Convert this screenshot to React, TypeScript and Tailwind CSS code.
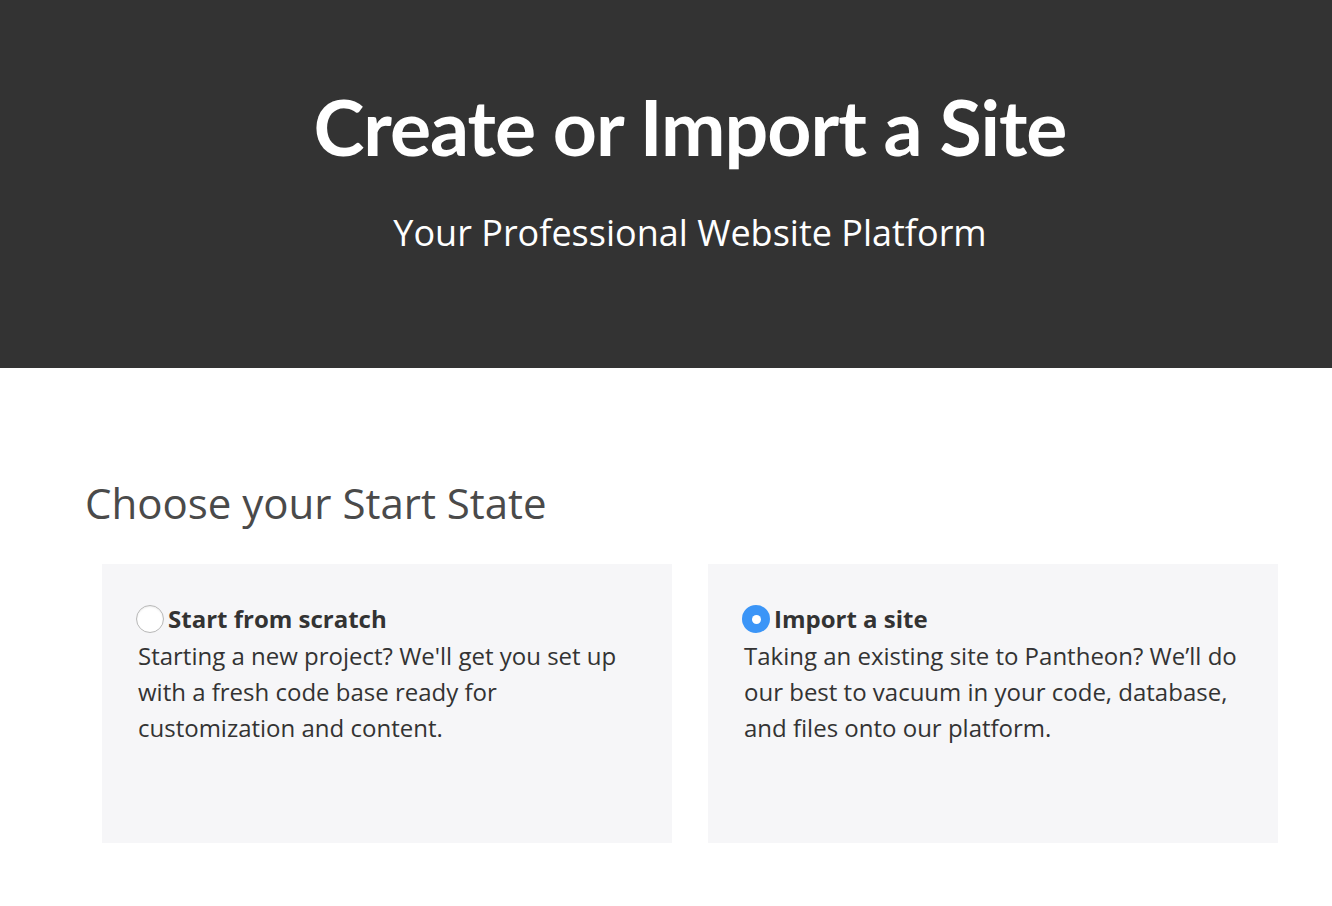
import React from "react";

const options = [
  {
    id: "scratch",
    title: "Start from scratch",
    body: "Starting a new project? We'll get you set up with a fresh code base ready for customization and content.",
    checked: false,
  },
  {
    id: "import",
    title: "Import a site",
    body: "Taking an existing site to Pantheon? We\u2019ll do our best to vacuum in your code, database, and files onto our platform.",
    checked: true,
  },
];

const Radio = ({ checked }: { checked: boolean }) =>
  checked ? (
    <span className="-ml-[2px] mr-[4px] flex h-[28px] w-[28px] shrink-0 items-center justify-center rounded-full bg-[#3b95f7]">
      <span className="h-[9px] w-[9px] rounded-full bg-white" />
    </span>
  ) : (
    <span className="-ml-[2px] mr-[4px] h-[28px] w-[28px] shrink-0 rounded-full border border-[#b8b8b8] bg-white shadow-[inset_0_1px_2px_rgba(0,0,0,0.08)]" />
  );

export default function App() {
  return (
    <div className="min-h-[906px] bg-white font-['Open_Sans',sans-serif] text-[#333]">
      <header className="flex h-[368px] flex-col items-center bg-[#333333] pl-[48px] pt-[76px] text-white">
        <h1 className="font-['Lato',sans-serif] text-[77px] font-bold leading-[100px] tracking-[-1px]">
          Create or Import a Site
        </h1>
        <p className="mt-[32px] text-[36px] leading-[50px]">Your Professional Website Platform</p>
      </header>

      <main className="pl-[85px] pt-[107px]">
        <h2 className="text-[42px] leading-[56px] text-[#4a4a4a]">Choose your Start State</h2>
        <div className="mt-[33px] flex gap-[36px] pl-[17px]">
          {options.map((o) => (
            <label
              key={o.id}
              className="flex h-[279px] w-[570px] flex-col bg-[#f6f6f8] pl-[36px] pr-[30px] pt-[40px]"
            >
              <div className="flex items-center">
                <Radio checked={o.checked} />
                <span className="text-[24px] font-bold leading-[30px] text-[#333]">{o.title}</span>
              </div>
              <p className="mt-[4px] text-[24px] leading-[36px] text-[#333]">{o.body}</p>
            </label>
          ))}
        </div>
      </main>
    </div>
  );
}
